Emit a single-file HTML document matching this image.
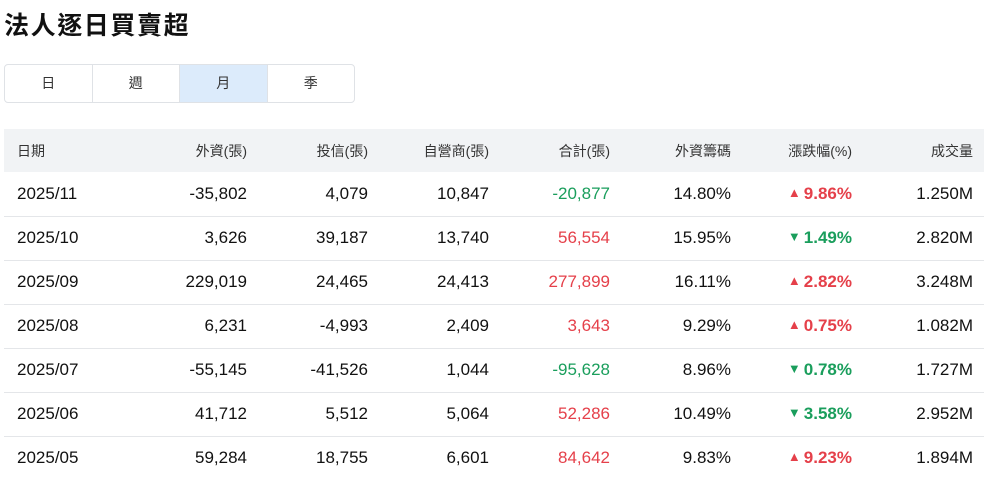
<!DOCTYPE html>
<html><head><meta charset="utf-8"><style>
*{margin:0;padding:0;box-sizing:border-box}
body{width:984px;height:479px;background:#fff;font-family:"Liberation Sans","Noto Sans CJK TC",sans-serif;color:#111;overflow:hidden;position:relative}
h1{position:absolute;left:4px;top:6px;font-size:25px;font-weight:bold;letter-spacing:1.6px;font-family:"Noto Sans CJK TC",sans-serif}
.tabs{position:absolute;left:4px;top:64px;width:351px;height:39px;border:1px solid #dfe2e6;border-radius:4px;display:flex;overflow:hidden}
.tabs div{flex:1;text-align:center;line-height:37px;font-size:14px;color:#333;border-right:1px solid #dfe2e6;font-family:"Noto Sans CJK TC",sans-serif}
.tabs div:last-child{border-right:none}
.tabs .on{background:#dcebfb}
table{position:absolute;left:4px;top:129px;width:980px;border-collapse:collapse}
th{height:43px;background:#f1f3f5;font-weight:normal;font-size:14px;color:#333;text-align:right;font-family:"Liberation Sans","Noto Sans CJK TC",sans-serif}
td{height:44px;font-size:17px;text-align:right;border-bottom:1px solid #e4e6e9}
tr:last-child td{border-bottom:none}
th:first-child,td:first-child{text-align:left;padding-left:13px}
th:last-child,td:last-child{padding-right:11px}
.c1{width:132px}.c{width:121px}
.r{color:#e5404a}.g{color:#1a9e5c}
.b{font-weight:bold}
.t{font-size:13px;margin-right:3px;position:relative;top:-2px}
</style></head><body>
<h1>法人逐日買賣超</h1>
<div class="tabs"><div>日</div><div>週</div><div class="on">月</div><div>季</div></div>
<table>
<tr><th class="c1">日期</th><th style="width:111px">外資(張)</th><th class="c">投信(張)</th><th class="c">自營商(張)</th><th class="c">合計(張)</th><th class="c">外資籌碼</th><th class="c">漲跌幅(%)</th><th>成交量</th></tr>
<tr><td>2025/11</td><td>-35,802</td><td>4,079</td><td>10,847</td><td class="g">-20,877</td><td>14.80%</td><td class="r b"><span class="t">▲</span>9.86%</td><td>1.250M</td></tr>
<tr><td>2025/10</td><td>3,626</td><td>39,187</td><td>13,740</td><td class="r">56,554</td><td>15.95%</td><td class="g b"><span class="t">▼</span>1.49%</td><td>2.820M</td></tr>
<tr><td>2025/09</td><td>229,019</td><td>24,465</td><td>24,413</td><td class="r">277,899</td><td>16.11%</td><td class="r b"><span class="t">▲</span>2.82%</td><td>3.248M</td></tr>
<tr><td>2025/08</td><td>6,231</td><td>-4,993</td><td>2,409</td><td class="r">3,643</td><td>9.29%</td><td class="r b"><span class="t">▲</span>0.75%</td><td>1.082M</td></tr>
<tr><td>2025/07</td><td>-55,145</td><td>-41,526</td><td>1,044</td><td class="g">-95,628</td><td>8.96%</td><td class="g b"><span class="t">▼</span>0.78%</td><td>1.727M</td></tr>
<tr><td>2025/06</td><td>41,712</td><td>5,512</td><td>5,064</td><td class="r">52,286</td><td>10.49%</td><td class="g b"><span class="t">▼</span>3.58%</td><td>2.952M</td></tr>
<tr><td>2025/05</td><td>59,284</td><td>18,755</td><td>6,601</td><td class="r">84,642</td><td>9.83%</td><td class="r b"><span class="t">▲</span>9.23%</td><td>1.894M</td></tr>
</table>
</body></html>
